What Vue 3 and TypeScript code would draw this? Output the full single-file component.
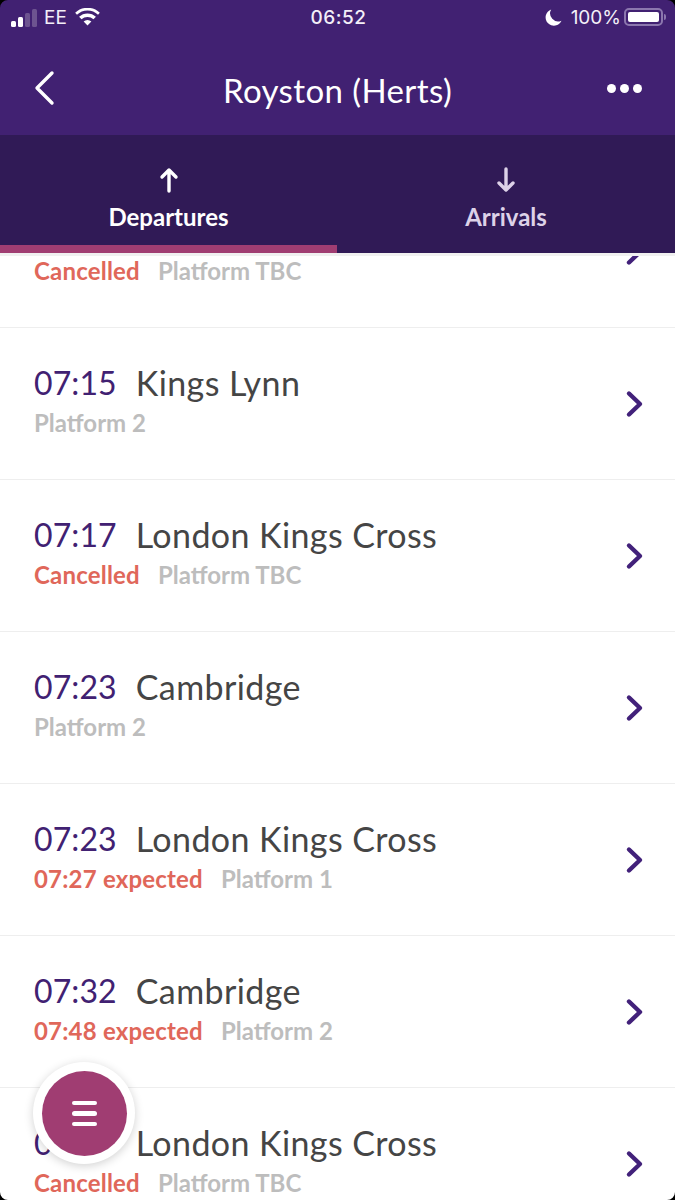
<script setup lang="ts">
interface Departure {
  time?: string
  destination?: string
  status?: string
  platform: string
}

// the first row is scrolled up under the tabs, only its second line shows
const departures: Departure[] = [
  { status: 'Cancelled', platform: 'Platform TBC' },
  { time: '07:15', destination: 'Kings Lynn', platform: 'Platform 2' },
  { time: '07:17', destination: 'London Kings Cross', status: 'Cancelled', platform: 'Platform TBC' },
  { time: '07:23', destination: 'Cambridge', platform: 'Platform 2' },
  { time: '07:23', destination: 'London Kings Cross', status: '07:27 expected', platform: 'Platform 1' },
  { time: '07:32', destination: 'Cambridge', status: '07:48 expected', platform: 'Platform 2' },
  { time: '07:38', destination: 'London Kings Cross', status: 'Cancelled', platform: 'Platform TBC' },
]
</script>

<template>
  <div class="screen">
    <header class="top">
      <div class="status">
        <div class="status-left">
          <span class="signal"><i class="on" /><i class="on" /><i /><i /></span>
          <span>EE</span>
          <svg class="wifi" viewBox="0 0 26 19" width="25" height="18">
            <path d="M13 18.500 8.900 14.200a5.900 5.900 0 0 1 8.200 0zM6.700 12 4.100 9.300a12.800 12.800 0 0 1 17.800 0L19.300 12a9.100 9.100 0 0 0-12.600 0zM1.900 7 0 5a18.800 18.800 0 0 1 26 0l-1.900 2A16 16 0 0 0 1.900 7z" fill="#fff" />
          </svg>
        </div>
        <div class="clock">06:52</div>
        <div class="status-right">
          <svg viewBox="0 0 17 17" width="17" height="17">
            <path d="M6.200 .5a8.300 8.300 0 1 0 10.300 11.200A8 8 0 0 1 6.200 .5z" fill="#fff" />
          </svg>
          <span class="pct">100%</span>
          <span class="battery"><b /></span>
          <span class="nub" />
        </div>
      </div>
      <div class="nav">
        <svg class="back" viewBox="0 0 22 36" width="22" height="36">
          <path d="M19 3 4 18l15 15" fill="none" stroke="#fff" stroke-width="3.400" stroke-linecap="round" stroke-linejoin="round" />
        </svg>
        <h1>Royston (Herts)</h1>
        <div class="more"><i /><i /><i /></div>
      </div>
      <nav class="tabs">
        <div class="tab active">
          <svg viewBox="0 0 20 26" width="20" height="26">
            <path d="M10 24V3M3 10l7-7 7 7" fill="none" stroke="currentColor" stroke-width="3.400" stroke-linecap="round" stroke-linejoin="round" />
          </svg>
          <span>Departures</span>
        </div>
        <div class="tab">
          <svg viewBox="0 0 20 26" width="20" height="26">
            <path d="M10 2v21M3 16l7 7 7-7" fill="none" stroke="currentColor" stroke-width="3.400" stroke-linecap="round" stroke-linejoin="round" />
          </svg>
          <span>Arrivals</span>
        </div>
      </nav>
    </header>

    <main class="list">
      <div v-for="(d, i) in departures" :key="i" class="row">
        <div class="info">
          <div class="title">
            <span v-if="d.time" class="time">{{ d.time }}</span>
            <span v-if="d.destination" class="dest">{{ d.destination }}</span>
          </div>
          <div class="sub">
            <span v-if="d.status" class="late">{{ d.status }}</span>
            <span class="platform">{{ d.platform }}</span>
          </div>
        </div>
        <svg class="chev" viewBox="0 0 20 32" width="20" height="32">
          <path d="M5 5.500 16 16 5 26.500" fill="none" stroke="#42217a" stroke-width="4.400" stroke-linecap="round" stroke-linejoin="round" />
        </svg>
      </div>
    </main>

    <button class="fab" aria-label="Menu">
      <span class="fab-inner"><i /><i /><i /></span>
    </button>
    <span class="corner tl" /><span class="corner tr" /><span class="corner bl" /><span class="corner br" />
  </div>
</template>

<style>
body { background: #fff; }
</style>

<style scoped>
.screen {
  position: relative;
  width: 675px;
  height: 1200px;
  overflow: hidden;
  background: #fff;
  font-family: Lato, 'Open Sans', sans-serif;
}

.top { position: relative; z-index: 2; background: #412172; color: #fff; }

.status {
  height: 34px;
  padding: 0 9px 0 11px;
  display: grid;
  grid-template-columns: 1fr auto 1fr;
  align-items: center;
  font-family: Inter, sans-serif;
  font-size: 19px;
  color: #f3eff8;
}
.status-left { display: flex; align-items: center; gap: 7px; }
.signal { display: flex; align-items: flex-end; gap: 2px; height: 19px; }
.signal i { width: 5px; border-radius: 1.500px; background: #6d5490; }
.signal i:nth-child(1) { height: 6px; }
.signal i:nth-child(2) { height: 10px; }
.signal i:nth-child(3) { height: 14px; }
.signal i:nth-child(4) { height: 18px; }
.signal i.on { background: #fff; }
.wifi { margin-left: 1px; }
.clock { font-weight: 500; letter-spacing: 0.5px; }
.status-right { display: flex; align-items: center; justify-content: flex-end; }
.pct { margin: 0 3px 0 9px; }
.battery {
  display: block;
  width: 39px;
  height: 18px;
  padding: 2px;
  box-sizing: border-box;
  border: 2px solid #8c77ae;
  border-radius: 5px;
}
.battery b { display: block; height: 100%; border-radius: 2px; background: #fff; }
.nub { width: 2px; height: 6px; margin-left: 1px; border-radius: 0 2px 2px 0; background: #8c77ae; }

.nav {
  height: 101px;
  padding: 0 33px;
  display: grid;
  grid-template-columns: 1fr auto 1fr;
  align-items: center;
}
.back { margin-top: 7px; }
.nav h1 { margin: 10px 0 0 0; font-size: 33px; font-weight: 400; letter-spacing: 0.4px; }
.more { display: flex; gap: 4px; justify-self: end; margin-top: 7px; }
.more i { width: 9px; height: 9px; border-radius: 50%; background: #fff; }

.tabs { height: 118px; display: grid; grid-template-columns: 337px 1fr; background: #301a56; }
.tab {
  display: flex;
  flex-direction: column;
  align-items: center;
  box-sizing: border-box;
  padding-top: 32px;
  color: #ddd2e8;
  font-size: 24px;
  font-weight: 700;
}
.tab span { margin-top: 9px; line-height: 30px; }
.tab.active { color: #fff; border-bottom: 8px solid #a03d72; }

.list { height: 947px; overflow: hidden; border-top: 3px solid #f0f0f0; box-sizing: border-box; }
.row {
  height: 152px;
  padding: 0 34px;
  display: flex;
  align-items: center;
  justify-content: space-between;
  box-sizing: border-box;
  border-bottom: 1px solid #eeeeee;
}
.row:first-child { margin-top: -80px; }
.info { margin-top: -6px; }
.title { display: flex; gap: 19px; height: 40px; font-size: 34px; line-height: 40px; letter-spacing: 0.4px; }
.time { color: #412172; font-size: 32px; letter-spacing: 0.1px; }
.dest { color: #454545; }
.sub { display: flex; gap: 18px; margin-top: 5px; font-size: 24px; font-weight: 700; line-height: 30px; letter-spacing: 0.2px; }
.late { color: #e0675a; }
.platform { color: #bdbdbd; letter-spacing: 0; }
.chev { margin: 0 -3px 0 0; }

.fab {
  position: absolute;
  left: 33px;
  top: 1062px;
  z-index: 3;
  width: 102px;
  height: 102px;
  padding: 9px;
  border: 0;
  border-radius: 50%;
  background: #fff;
  box-shadow: 0 2px 10px rgba(0, 0, 0, 0.18);
}
.fab-inner {
  display: flex;
  flex-direction: column;
  align-items: center;
  justify-content: center;
  gap: 6px;
  width: 85px;
  height: 85px;
  border-radius: 50%;
  background: #a03d72;
}
.fab-inner i { width: 25px; height: 4.500px; border-radius: 3px; background: #fff; }

.corner { position: absolute; z-index: 4; width: 8px; height: 8px; background: #000; }
.tl { left: 0; top: 0; clip-path: path('M0 0H8A8 8 0 0 0 0 8Z'); }
.tr { right: 0; top: 0; clip-path: path('M0 0H8V8A8 8 0 0 0 0 0Z'); }
.bl { left: 0; bottom: 0; clip-path: path('M0 0A8 8 0 0 0 8 8H0Z'); }
.br { right: 0; bottom: 0; clip-path: path('M8 0V8H0A8 8 0 0 0 8 0Z'); }
</style>
